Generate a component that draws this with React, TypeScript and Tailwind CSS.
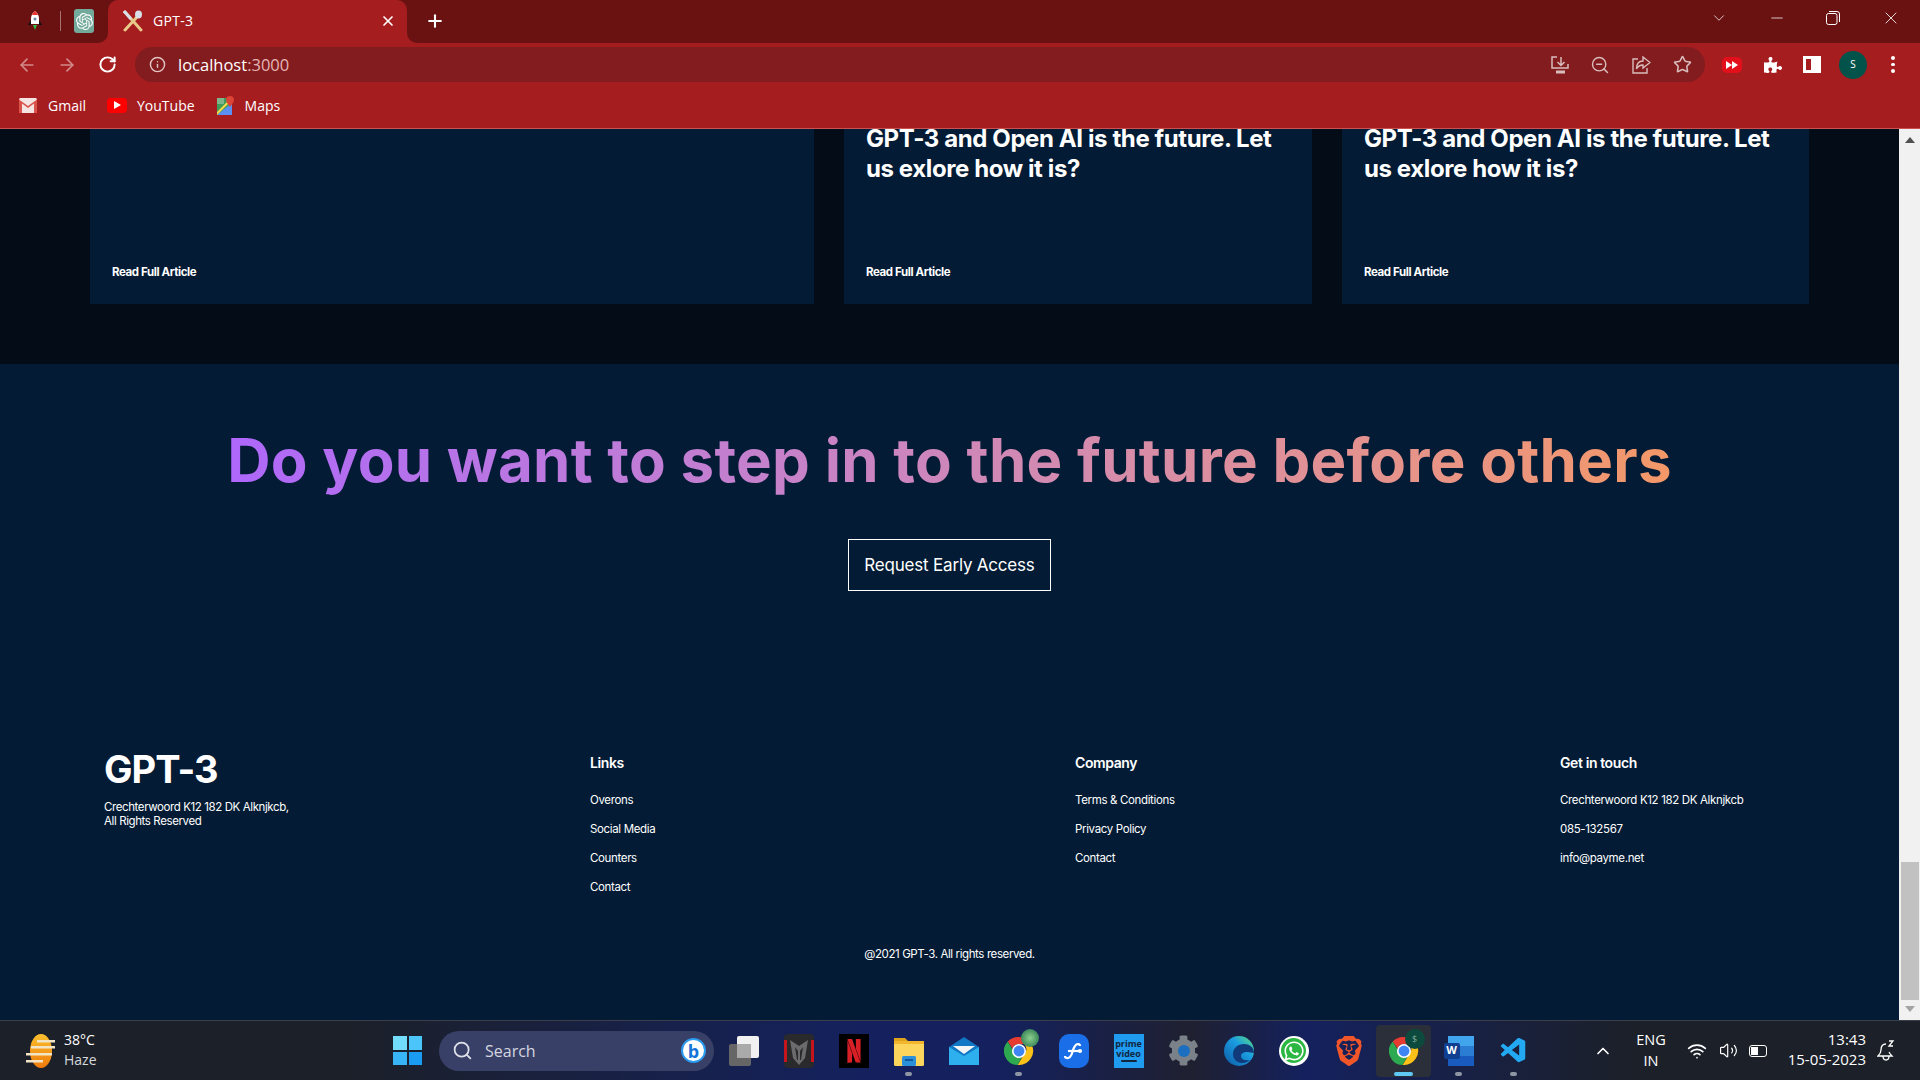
import { ArrowLeft, ArrowRight, ChevronDown, ChevronUp, Info, Minus, Plus, RotateCw, Search, Star, Volume2, Wifi, X, ZoomOut } from "lucide-react";
import { FaCog, FaPuzzlePiece, FaWhatsapp } from "react-icons/fa";
import { SiBrave, SiNetflix, SiOpenai } from "react-icons/si";
import { VscVscode } from "react-icons/vsc";

const brandFont = { fontFamily: "Inter, 'Liberation Sans', sans-serif" };

const footerColumns = [
  { title: "Links", left: "w-[485px]", items: ["Overons", "Social Media", "Counters", "Contact"] },
  { title: "Company", left: "w-[485px]", items: ["Terms & Conditions", "Privacy Policy", "Contact"] },
  { title: "Get in touch", left: "flex-1", items: ["Crechterwoord K12 182 DK Alknjkcb", "085-132567", "info@payme.net"] },
];

function ChromeLogo({ size = 30 }: { size?: number }) {
  return (
    <svg width={size} height={size} viewBox="0 0 32 32">
      <path d="M16 1a15 15 0 0 1 13 7.5H16a7.5 7.5 0 0 0-7 4.7L4 5.8A15 15 0 0 1 16 1z" fill="#e53b30" />
      <path d="M29 8.500a15 15 0 0 1-14.500 22.400L21 20a7.500 7.500 0 0 0 .5-11.500z" fill="#fbc118" />
      <path d="M4 5.800L10 16a6.500 6.500 0 0 0 9.500 5.500L14.500 31A15 15 0 0 1 4 5.800z" fill="#2da94f" />
      <circle cx="16" cy="16" r="7.500" fill="#fff" />
      <circle cx="16" cy="16" r="5.800" fill="#3f85f4" />
    </svg>
  );
}

function TabStrip() {
  return (
    <div className="flex h-[43px] bg-[#a51d1f] text-white">
      <div className="flex w-[108px] items-center rounded-br-[10px] bg-[#6a1212] pb-[1px]">
        <div className="flex w-[60px] justify-center pl-[10px]">
          <svg width="14" height="20" viewBox="0 0 14 20">
            <path d="M7 0c3 2 4 5 4 8v5H3V8c0-3 1-6 4-8z" fill="#fff" />
            <path d="M7 0c1.500 1 2.500 2.500 3 4H4c.5-1.500 1.500-3 3-4z" fill="#e33" />
            <circle cx="7" cy="8" r="1.500" fill="#68a" />
            <path d="M3 9L0 14h3zM11 9l3 5h-3z" fill="#111" />
            <path d="M5 14h4l-2 5z" fill="#3b4" />
          </svg>
        </div>
        <div className="h-[20px] w-px bg-[#a97070]" />
        <div className="ml-[13px] flex h-[24px] w-[20px] items-center justify-center rounded-[3px] bg-[#74aa9c]">
          <SiOpenai className="text-[17px] text-white" />
        </div>
      </div>
      <div className="w-[299px] bg-[#6a1212]">
        <div className="flex h-full items-center rounded-t-[10px] bg-[#a51d1f] pb-[2px] pl-[15px] pr-[11px]">
          <svg width="20" height="22" viewBox="0 0 20 22" fill="none">
            <path d="M2 2l16 18" stroke="#e8c98a" strokeWidth="3" strokeLinecap="round" />
            <path d="M2 20L14 7" stroke="#e8c98a" strokeWidth="3" strokeLinecap="round" />
            <ellipse cx="15.500" cy="4.500" rx="3.500" ry="4" fill="#d8dfe8" />
            <path d="M1 1l7 8" stroke="#d8dfe8" strokeWidth="3" />
          </svg>
          <span className="ml-[10px] flex-1 text-[14px] tracking-[0.3px]" style={{ fontFamily: "'Open Sans', sans-serif" }}>GPT-3</span>
          <X size={16} strokeWidth={2.5} />
        </div>
      </div>
      <div className="flex flex-1 items-center rounded-bl-[10px] bg-[#6a1212] pb-[2px]">
        <Plus size={20} strokeWidth={2.500} className="ml-[18px]" />
        <div className="flex-1" />
        <div className="flex items-center pb-[5px]">
          <ChevronDown size={18} strokeWidth={1} className="mr-[40px]" />
          <Minus size={18} strokeWidth={1} className="mr-[40px]" />
          <svg width="14" height="14" viewBox="0 0 14 14" fill="none" stroke="#fff" className="mr-[41px]">
            <rect x="0.500" y="2.500" width="10.500" height="11" rx="2" />
            <path d="M3 .5h8a2.500 2.500 0 0 1 2.500 2.500v8" />
          </svg>
          <X size={20} strokeWidth={1} className="mr-[19px]" />
        </div>
      </div>
    </div>
  );
}

function Toolbar() {
  return (
    <div className="flex h-[43px] items-center bg-[#a51d1f]">
      <div className="flex w-[135px] items-center pl-[17px]">
        <ArrowLeft size={20} strokeWidth={2} className="text-[#d28a8a]" />
        <ArrowRight size={20} strokeWidth={2} className="ml-[20px] text-[#d28a8a]" />
        <RotateCw size={19} strokeWidth={2.500} className="ml-[21px] text-white" />
      </div>
      <div className="flex h-[35px] w-[1570px] items-center rounded-full bg-[#831c1e] pl-[14px] pr-[13px]">
        <Info size={17} strokeWidth={2} className="text-[#e3c5c5]" />
        <span className="ml-[12px] flex-1 pt-[1px] text-[16.500px] text-white" style={{ fontFamily: "'Open Sans', sans-serif" }}>
          localhost<span className="text-[#e3b5b5]">:3000</span>
        </span>
        <svg width="19" height="18" viewBox="0 0 19 18" fill="none" stroke="#d9bcbc" strokeWidth="1.500" className="mr-[20px]">
          <path d="M6 1H1v11h16V8" />
          <path d="M10 1v8M6.500 6l3.500 3.500L13.500 6" />
          <path d="M5 16h9" strokeWidth="3" />
        </svg>
        <ZoomOut size={20} strokeWidth={1.700} className="mr-[22px] text-[#d9bcbc]" />
        <svg width="19" height="18" viewBox="0 0 19 18" fill="none" stroke="#d9bcbc" strokeWidth="1.400" className="mr-[22px]">
          <path d="M6 3H1v14h14v-5" />
          <path d="M11 1l7 5.500-7 5.500V9c-3 0-5 1-6.500 4 0-5 2.500-8 6.500-8z" />
        </svg>
        <Star size={19} strokeWidth={2} className="text-[#d9bcbc]" />
      </div>
      <div className="flex flex-1 items-center">
        <div className="ml-[17px] flex h-[16px] w-[20px] items-center justify-center rounded-[5px] bg-[#e3101c]">
          <svg width="12" height="8" viewBox="0 0 12 8" fill="#fff"><path d="M0 0l6 4-6 4zM6 0l6 4-6 4z" /></svg>
        </div>
        <FaPuzzlePiece className="ml-[22px] text-[18px] text-white" />
        <div className="ml-[21px] flex h-[17px] w-[18px] justify-end border-[3px] border-white bg-transparent">
          <div className="w-[7px] bg-white" />
        </div>
        <div className="ml-[18px] flex h-[28px] w-[28px] items-center justify-center rounded-full bg-[#04534a] text-[10px] font-medium text-white" style={{ fontFamily: "'Open Sans', sans-serif" }}>
          S
        </div>
        <div className="ml-[24px] flex flex-col gap-[3px]">
          <div className="h-[3.500px] w-[3.500px] rounded-full bg-white" />
          <div className="h-[3.500px] w-[3.500px] rounded-full bg-white" />
          <div className="h-[3.500px] w-[3.500px] rounded-full bg-white" />
        </div>
      </div>
    </div>
  );
}

function Bookmarks() {
  const labelFont = { fontFamily: "'Open Sans', sans-serif" };
  return (
    <div className="flex h-[43px] items-center border-b border-[#c9514f] bg-[#a51d1f] pb-[4px] pl-[19px] text-[14px] text-white" style={labelFont}>
      <svg width="18" height="15" viewBox="0 0 18 15">
        <rect width="18" height="15" rx="1.500" fill="#f5e5e2" />
        <path d="M0 1.500L9 8l9-6.500V15h-3V5.500L9 10 3 5.500V15H0z" fill="#d9534a" />
      </svg>
      <span className="ml-[11px]">Gmail</span>
      <div className="ml-[21px] flex h-[15px] w-[20px] items-center justify-center rounded-[4px] bg-[#f00]">
        <svg width="7" height="8" viewBox="0 0 7 8" fill="#fff"><path d="M0 0l7 4-7 4z" /></svg>
      </div>
      <span className="ml-[10px]">YouTube</span>
      <svg width="17" height="19" viewBox="0 0 17 19" className="ml-[22px]">
        <rect y="2" width="15" height="17" fill="#3f9b5a" />
        <path d="M0 19L15 7v12z" fill="#5b8ff2" />
        <path d="M0 16L12 4h3L0 19z" fill="#f8d84a" />
        <path d="M0 2h7v6H0z" fill="#7db68a" />
        <path d="M13 0a4 4 0 0 1 4 4c0 2.500-3 5-4 7-1-2-4-4.500-4-7a4 4 0 0 1 4-4z" fill="#db4437" />
      </svg>
      <span className="ml-[11px]">Maps</span>
    </div>
  );
}

function BlogStrip() {
  const cards = [
    { width: "w-[724px]", title: false },
    { width: "w-[468px]", title: true },
    { width: "w-[467px]", title: true },
  ];
  return (
    <section className="flex h-[235px] gap-[30px] bg-[#040c18] pb-[60px] pl-[90px]">
      {cards.map((card, i) => (
        <div key={i} className={`${card.width} flex flex-col justify-between bg-[#031b34] px-[22px] pb-[24px]`}>
          <h3 className="-mt-[5px] text-[24px] font-bold leading-[30px] tracking-[-0.4px] text-white" style={brandFont}>
            {card.title ? <>GPT-3 and Open AI is the future. Let<br />us exlore how it is?</> : null}
          </h3>
          <p className="text-[11.500px] font-bold leading-[16px] tracking-[-0.4px] text-white" style={brandFont}>Read Full Article</p>
        </div>
      ))}
    </section>
  );
}

function Footer() {
  return (
    <footer className="flex flex-1 flex-col bg-[#031b34] text-white" style={brandFont}>
      <div className="flex flex-col items-center pt-[59px]">
        <h1 className="bg-gradient-to-r from-[#ae67fa] to-[#f49867] bg-clip-text text-[60px] font-bold leading-[75px] tracking-[0.27px] text-transparent">
          Do you want to step in to the future before others
        </h1>
        <div className="mt-[41px] flex h-[52px] w-[203px] items-center justify-center border border-white pt-[1px] text-[17px] tracking-[-0.2px] text-white">
          Request Early Access
        </div>
      </div>
      <div className="mt-[163px] flex pl-[105px]">
        <div className="w-[485px]">
          <div className="-ml-[1px] -mt-[8px] text-[38px] font-bold leading-[46px] tracking-[-1px]">GPT-3</div>
          <p className="-ml-[1px] mt-[8px] text-[11.500px] leading-[14px] tracking-[-0.4px]">Crechterwoord K12 182 DK Alknjkcb,<br />All Rights Reserved</p>
        </div>
        {footerColumns.map((col) => (
          <div key={col.title} className={col.left}>
            <h4 className="text-[14px] font-semibold leading-[17px] tracking-[-0.4px]">{col.title}</h4>
            <ul className="mt-[22px] flex flex-col gap-[14px] text-[11.500px] leading-[15px] tracking-[-0.35px]">
              {col.items.map((item) => (
                <li key={item}>{item}</li>
              ))}
            </ul>
          </div>
        ))}
      </div>
      <p className="mt-[52px] text-center text-[11.500px] leading-[15px] tracking-[-0.4px]">@2021 GPT-3. All rights reserved.</p>
    </footer>
  );
}

function Scrollbar() {
  return (
    <div className="flex w-[21px] flex-col items-center bg-[#f1f1f1]">
      <div className="mt-[8px] h-0 w-0 border-x-[5px] border-b-[6px] border-x-transparent border-b-[#505050]" />
      <div className="mt-[719px] h-[138px] w-[18px] bg-[#c1c1c1]" />
      <div className="mt-[6px] h-0 w-0 border-x-[5px] border-t-[6px] border-x-transparent border-t-[#a3a3a3]" />
    </div>
  );
}

function TaskIcon({ children, dot, active }: { children: React.ReactNode; dot?: boolean; active?: boolean }) {
  return (
    <div className={`relative flex h-[52px] w-[55px] items-center justify-center rounded-[4px] ${active ? "bg-[#2b2f39]" : ""}`}>
      {children}
      {dot ? <div className="absolute bottom-[1px] h-[4px] w-[7px] rounded-full bg-[#8f96a3]" /> : null}
      {active ? <div className="absolute bottom-[1px] h-[4px] w-[19px] rounded-full bg-[#5fc8f5]" /> : null}
    </div>
  );
}

function Taskbar() {
  return (
    <div className="flex h-[60px] items-center border-t border-[#3b3f4c] bg-[linear-gradient(90deg,#1c2029_0%,#1c2029_18%,#14215e_45%,#14215e_52%,#1f2030_62%,#14215e_68%,#1c2029_85%)] text-white" style={{ fontFamily: "'Open Sans', sans-serif" }}>
      <div className="flex w-[380px] items-center pl-[25px]">
        <svg width="30" height="36" viewBox="0 0 30 36">
          <defs>
            <linearGradient id="sun" x1="0" y1="0" x2="0" y2="1">
              <stop offset="0" stopColor="#fbc02d" />
              <stop offset="1" stopColor="#ee7a0c" />
            </linearGradient>
          </defs>
          <ellipse cx="16" cy="18" rx="11" ry="17" fill="url(#sun)" />
          <path d="M12 7h18v2.500H12zM6 13h24v2.500H6zM1 20h26v2.500H1zM1 27h17v2.500H1z" fill="#f3e4c6" />
        </svg>
        <div className="ml-[9px] pb-[2px] text-[14px] leading-[20px]">
          <div>38°C</div>
          <div className="text-[#d6d8dc]">Haze</div>
        </div>
      </div>
      <div className="flex w-[55px] justify-center">
        <div className="grid h-[29px] w-[29px] grid-cols-2 gap-[2px]">
          <div className="bg-[#74dcfb]" />
          <div className="bg-[#4cc6fa]" />
          <div className="bg-[#37b5f7]" />
          <div className="bg-[#1a9cf3]" />
        </div>
      </div>
      <div className="ml-[4px] flex h-[40px] w-[275px] items-center rounded-full bg-[#394067] pl-[13px] pr-[8px] text-[16px] text-[#d3d6e0]">
        <Search size={21} strokeWidth={2} className="text-[#dfe2ea]" />
        <span className="ml-[12px] flex-1">Search</span>
        <div className="flex h-[25px] w-[25px] items-center justify-center rounded-full border-[2px] border-[#2a9bf0] bg-white text-[18px] font-bold leading-none text-[#1673d8]">
          b
        </div>
      </div>
      <div className="ml-[2px] flex">
        <TaskIcon>
          <div className="relative h-[30px] w-[30px]">
            <div className="absolute bottom-0 left-0 h-[22px] w-[22px] rounded-[2px] bg-[#666]" />
            <div className="absolute right-0 top-0 h-[22px] w-[22px] rounded-[2px] bg-[#f1f1f1]" />
            <div className="absolute left-[8px] top-[8px] h-[14px] w-[14px] bg-[#aaa]" />
          </div>
        </TaskIcon>
        <TaskIcon>
          <svg width="30" height="34" viewBox="0 0 30 34">
            <rect width="30" height="34" rx="4" fill="#2a2a2c" />
            <path d="M0 6h3v22H0zM27 6h3v22h-3z" fill="#c3151b" />
            <path d="M6 6l9 6 9-6-3 18-6 7-6-7z" fill="#6b6b6e" />
            <path d="M11 13l3 4v9h-1zM19 13l-3 4v9h1z" fill="#2a2a2c" />
          </svg>
        </TaskIcon>
        <TaskIcon>
          <div className="flex h-[34px] w-[30px] items-center justify-center bg-black">
            <SiNetflix className="text-[24px] text-[#d81f26]" />
          </div>
        </TaskIcon>
        <TaskIcon dot>
          <svg width="30" height="30" viewBox="0 0 30 30">
            <path d="M0 2h11l3 3h-14z" fill="#e0a41c" />
            <rect y="5" width="30" height="25" rx="1.500" fill="#fcd55c" />
            <rect y="5" width="30" height="3" fill="#f2b62e" />
            <rect x="8" y="20" width="14" height="10" rx="1.500" fill="#2a90d9" />
            <rect x="11" y="23" width="8" height="2" fill="#0f5a9c" />
          </svg>
        </TaskIcon>
        <TaskIcon>
          <svg width="30" height="30" viewBox="0 0 30 30">
            <path d="M15 1L30 11v18H0V11z" fill="#1077c4" />
            <path d="M4 10h22l-11 8z" fill="#f2f4f6" />
            <path d="M0 11l15 9 15-9v18H0z" fill="#2fb0ee" />
          </svg>
        </TaskIcon>
        <TaskIcon dot>
          <div className="relative">
            <ChromeLogo />
            <div className="absolute -right-[5px] -top-[7px] h-[18px] w-[18px] rounded-full bg-[radial-gradient(circle,#8ed08e,#1b6b46)]" />
          </div>
        </TaskIcon>
        <TaskIcon>
          <div className="flex h-[34px] w-[30px] items-center justify-center rounded-[10px] bg-[#1a6fe8]">
            <svg width="20" height="18" viewBox="0 0 20 18" fill="none" stroke="#fff" strokeWidth="2.200">
              <path d="M1 14c0 2 3 3 5 1 3-3 2-7 5-11 2-3 5-2 5 0" />
              <path d="M4 9h12" />
              <circle cx="16" cy="9" r="1" fill="#fff" />
            </svg>
          </div>
        </TaskIcon>
        <TaskIcon>
          <div className="flex h-[34px] w-[30px] flex-col items-center justify-center bg-[#1f9bf0] text-[9px] font-bold leading-[10px] text-[#11253f]">
            <span>prime</span>
            <span>video</span>
            <div className="mt-[1px] h-[2px] w-[16px] rounded-full bg-[#11253f]" />
          </div>
        </TaskIcon>
        <TaskIcon>
          <div className="relative flex items-center justify-center">
            <FaCog className="text-[31px] text-[#7a8189]" />
            <div className="absolute h-[12px] w-[12px] rounded-full bg-[#1c6fc0]" />
          </div>
        </TaskIcon>
        <TaskIcon>
          <svg width="30" height="30" viewBox="0 0 30 30">
            <defs>
              <linearGradient id="edge" x1="0" y1="1" x2="1" y2="0">
                <stop offset="0" stopColor="#0c59a4" />
                <stop offset="0.6" stopColor="#1b9de2" />
                <stop offset="1" stopColor="#5de27a" />
              </linearGradient>
            </defs>
            <circle cx="15" cy="15" r="15" fill="url(#edge)" />
            <path d="M30 17c0-6-5-9-10-9-6 0-11 4-11 10 0 5 4 9 9 9 3 0 6-1 8-3-4 1-9 0-9-4 0-3 3-4 6-4 3 0 5 1 7 1z" fill="#103a7a" />
          </svg>
        </TaskIcon>
        <TaskIcon>
          <div className="flex h-[30px] w-[30px] items-center justify-center rounded-full bg-white">
            <div className="flex h-[25px] w-[25px] items-center justify-center rounded-full bg-[#2bb741]">
              <FaWhatsapp className="text-[22px] text-white" />
            </div>
          </div>
        </TaskIcon>
        <TaskIcon>
          <SiBrave className="text-[30px] text-[#f1562b]" />
        </TaskIcon>
        <TaskIcon active>
          <div className="relative">
            <ChromeLogo />
            <div className="absolute -right-[6px] -top-[7px] flex h-[20px] w-[20px] items-center justify-center rounded-full bg-[#0b4a3c] text-[9px] text-[#7fa59a]">$</div>
          </div>
        </TaskIcon>
        <TaskIcon dot>
          <div className="relative h-[30px] w-[30px]">
            <div className="absolute right-0 top-0 flex h-[30px] w-[26px] flex-col">
              <div className="flex-1 bg-[#41a5ee]" />
              <div className="flex-1 bg-[#2b7cd3]" />
              <div className="flex-1 bg-[#185abd]" />
            </div>
            <div className="absolute left-0 top-[7px] flex h-[16px] w-[16px] items-center justify-center rounded-[2px] bg-[#103f91] text-[11px] font-bold text-white">W</div>
          </div>
        </TaskIcon>
        <TaskIcon dot>
          <VscVscode className="text-[30px] text-[#23a9f2]" />
        </TaskIcon>
      </div>
      <div className="ml-[44px] flex w-[36px] justify-center">
        <ChevronUp size={20} strokeWidth={2} />
      </div>
      <div className="w-[60px] pb-[2px] text-center text-[14.500px] leading-[21px]">
        <div>ENG</div>
        <div>IN</div>
      </div>
      <div className="flex w-[32px] justify-center">
        <Wifi size={20} strokeWidth={2} />
      </div>
      <div className="flex w-[30px] justify-center">
        <Volume2 size={19} strokeWidth={1.500} />
      </div>
      <div className="flex w-[30px] justify-center">
        <div className="flex h-[12px] w-[18px] items-center rounded-[3px] border border-white p-[1px]">
          <div className="h-full w-[7px] bg-white" />
        </div>
      </div>
      <div className="w-[93px] pb-[3px] text-right text-[15px] leading-[20px]">
        <div>13:43</div>
        <div>15-05-2023</div>
      </div>
      <div className="flex w-[42px] justify-center">
        <svg width="20" height="22" viewBox="0 0 20 22" fill="none" stroke="#fff" strokeWidth="1.300">
          <path d="M9 4c-3 0-5 2-5 6 0 3-2 5-3 6h14c-1-1-2-2-3-4" />
          <path d="M6 16c0 3 1.500 4 3 4s3-1 3-4" />
          <path d="M12 1h4l-4 5h4" />
        </svg>
      </div>
    </div>
  );
}

export default function App() {
  return (
    <div className="flex h-screen w-full flex-col overflow-hidden">
      <TabStrip />
      <Toolbar />
      <Bookmarks />
      <div className="flex min-h-0 flex-1">
        <main className="flex min-w-0 flex-1 flex-col overflow-hidden">
          <BlogStrip />
          <Footer />
        </main>
        <Scrollbar />
      </div>
      <Taskbar />
    </div>
  );
}
